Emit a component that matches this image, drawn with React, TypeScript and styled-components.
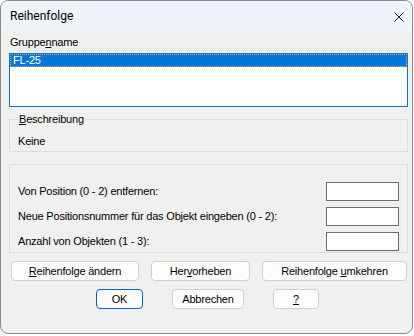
import React from 'react';
import styled, { createGlobalStyle } from 'styled-components';

const Global = createGlobalStyle`
  html, body { margin: 0; padding: 0; background: #ffffff; }
  body { font-family: "Liberation Sans", Arial, sans-serif; }
  * { box-sizing: border-box; }
`;

const Window = styled.div`
  width: 413px;
  height: 334px;
  border: 1px solid #8a8a8a;
  border-radius: 8px;
  background: #f0f0f0;
  overflow: hidden;
  display: flex;
  flex-direction: column;
`;

const TitleBar = styled.div`
  flex: none;
  height: 30px;
  background: #eef4f9;
  display: flex;
  align-items: center;
  justify-content: space-between;
  padding: 0 8px 0 9px;
`;

const Title = styled.span`
  font-family: Roboto, "Noto Sans", sans-serif;
  font-size: 12px;
  color: #000;
`;

const CloseButton = styled.button`
  width: 10px;
  height: 10px;
  padding: 0;
  border: none;
  background: none;
  display: flex;
  margin-top: 1px;
`;

const Body = styled.div`
  display: flex;
  flex-direction: column;
  padding: 5px 4px 0 8px;
  font-size: 11px;
  line-height: 13px;
  letter-spacing: -0.2px;
  color: #000;
`;

const FieldLabel = styled.div`
  padding-left: 1px;
`;

const ListBox = styled.div`
  margin-top: 4px;
  height: 54px;
  border: 1px solid #0078d7;
  background: #ffffff;
`;

const ListItem = styled.div<{ $selected?: boolean }>`
  height: 13px;
  padding-left: 3px;
  background: ${(p) => (p.$selected ? '#0078d7' : 'transparent')};
  color: ${(p) => (p.$selected ? '#ffffff' : '#000')};
  outline: ${(p) => (p.$selected ? '1px dotted #f59a4a' : 'none')};
  outline-offset: -1px;
`;

const GroupBox = styled.fieldset`
  margin: 6px 0 0 0;
  padding: 0 8px 3px 8px;
  border: 1px solid #dcdcdc;
  min-width: 0;
`;

const Legend = styled.legend`
  padding: 0 1px;
  line-height: 13px;
`;

const GroupText = styled.div`
  margin-top: 9px;
`;

const Panel = styled.div`
  margin-top: 12px;
  border: 1px solid #dcdcdc;
  padding: 17px 8px 1px 8px;
  display: grid;
  row-gap: 6px;
`;

const FormRow = styled.div`
  display: flex;
  align-items: center;
  justify-content: space-between;
  height: 19px;
`;

const NumberInput = styled.input`
  width: 73px;
  height: 19px;
  border: 1px solid #6e6e6e;
  background: #ffffff;
  padding: 0 2px;
  margin: 0;
  font: inherit;
  outline: none;
`;

const ButtonRow = styled.div<{ $cols: string; $gap: number; $indent: number }>`
  margin-top: 8px;
  display: grid;
  grid-template-columns: ${(p) => p.$cols};
  column-gap: ${(p) => p.$gap}px;
  padding-left: ${(p) => p.$indent}px;
`;

const Button = styled.button<{ $default?: boolean }>`
  height: 20px;
  padding: 0;
  border: 1px solid ${(p) => (p.$default ? '#0067c0' : '#d0d0d0')};
  border-radius: 4px;
  background: #fdfdfd;
  font-family: "Liberation Sans", Arial, sans-serif;
  font-size: 11px;
  line-height: 13px;
  letter-spacing: -0.2px;
  color: #000;
  text-align: center;
`;

const CloseIcon = () => (
  <svg width="10" height="10" viewBox="0 0 10 10">
    <path d="M0.5 0.5 L9.5 9.5 M9.5 0.5 L0.5 9.5" stroke="#1b1b1b" strokeWidth="1" fill="none" />
  </svg>
);

export default function App() {
  return (
    <>
      <Global />
      <Window>
        <TitleBar>
          <Title>Reihenfolge</Title>
          <CloseButton aria-label="Schließen">
            <CloseIcon />
          </CloseButton>
        </TitleBar>
        <Body>
          <FieldLabel>
            Gruppe<u>n</u>name
          </FieldLabel>
          <ListBox>
            <ListItem $selected>FL-25</ListItem>
          </ListBox>
          <GroupBox>
            <Legend>
              <u>B</u>eschreibung
            </Legend>
            <GroupText>Keine</GroupText>
          </GroupBox>
          <Panel>
            <FormRow>
              <span>Von Position (0 - 2) entfernen:</span>
              <NumberInput />
            </FormRow>
            <FormRow>
              <span>Neue Positionsnummer für das Objekt eingeben (0 - 2):</span>
              <NumberInput />
            </FormRow>
            <FormRow>
              <span>Anzahl von Objekten (1 - 3):</span>
              <NumberInput />
            </FormRow>
          </Panel>
          <ButtonRow $cols="128px 99px 145px" $gap={12} $indent={2}>
            <Button>
              <u>R</u>eihenfolge ändern
            </Button>
            <Button>
              Her<u>v</u>orheben
            </Button>
            <Button>
              Reihenfolge <u>u</u>mkehren
            </Button>
          </ButtonRow>
          <ButtonRow $cols="47px 72px 46px" $gap={29} $indent={87}>
            <Button $default>OK</Button>
            <Button>Abbrechen</Button>
            <Button>
              <u>?</u>
            </Button>
          </ButtonRow>
        </Body>
      </Window>
    </>
  );
}
